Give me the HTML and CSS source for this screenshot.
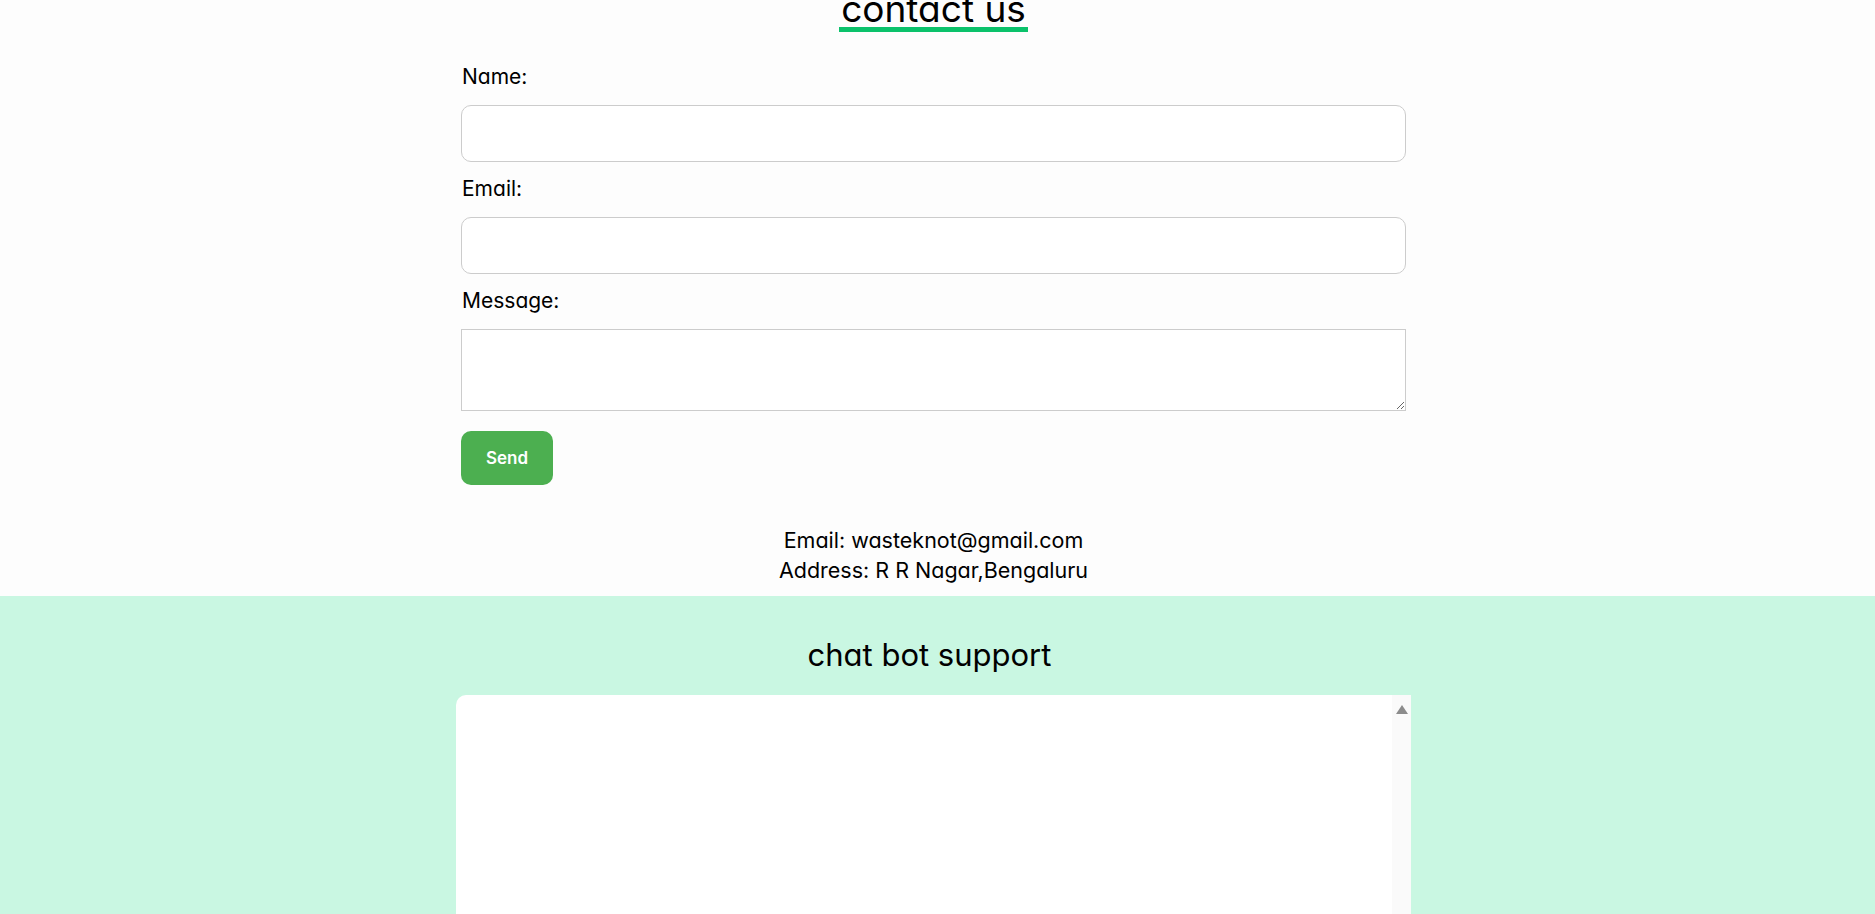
FILE: index.html
```html
<!DOCTYPE html>
<html lang="en">
<head>
<meta charset="utf-8">
<title>Contact us</title>
<link rel="stylesheet" href="styles.css">
</head>
<body>
<section class="contact">
  <div class="title-wrap"><h2 class="title">contact us</h2></div>
  <form class="form">
    <label class="label" for="name">Name:</label>
    <input class="field" id="name" type="text">
    <label class="label" for="email">Email:</label>
    <input class="field" id="email" type="email">
    <label class="label" for="msg">Message:</label>
    <textarea class="area" id="msg"></textarea>
    <button class="send" type="button">Send</button>
  </form>
  <div class="info">
    <p>Email: wasteknot@gmail.com</p>
    <p>Address: R R Nagar,Bengaluru</p>
  </div>
</section>
<section class="chat">
  <h2 class="chat-title">chat bot support</h2>
  <div class="chat-box">
    <div class="chat-body"></div>
    <div class="track"><span class="arrow"></span></div>
  </div>
</section>
</body>
</html>
```
FILE: styles.css
```css
html, body {
  margin: 0;
  padding: 0;
  height: 914px;
  overflow: hidden;
}
body {
  background: #fdfdfd;
  font-family: Inter, "Noto Sans", "Liberation Sans", sans-serif;
  font-feature-settings: "cv11" 1;
  color: #000;
}
.contact {
  padding-right: 8px;
}
.title-wrap {
  display: flex;
  justify-content: center;
  margin-top: -9px;
}
.title {
  margin: 0;
  font-size: 37px;
  font-weight: 400;
  line-height: 36px;
  border-bottom: 5px solid #0bc26b;
  padding: 0 2px;
}
.form {
  width: 945px;
  margin: 31px auto 0;
  display: flex;
  flex-direction: column;
  align-items: flex-start;
}
.label {
  font-size: 21px;
  line-height: 28px;
  padding-left: 1px;
  margin-bottom: 14px;
}
.field {
  box-sizing: border-box;
  width: 945px;
  height: 57px;
  border: 1px solid #cccccc;
  border-radius: 10px;
  background: #fff;
  margin: 0 0 13px;
  font: inherit;
}
.area {
  box-sizing: border-box;
  width: 945px;
  height: 82px;
  border: 1px solid #cccccc;
  border-radius: 0;
  background: #fff;
  margin: 0 0 20px;
  font: inherit;
}
.send {
  width: 92px;
  height: 54px;
  border: none;
  border-radius: 10px;
  background: #4caf50;
  color: #fff;
  font-family: inherit;
  font-size: 17px;
  font-weight: 600;
  padding: 0;
}
.info {
  margin-top: 40px;
  text-align: center;
  font-size: 21.5px;
  line-height: 30px;
}
.info p {
  margin: 0;
}
.chat {
  margin-top: 11px;
  background: #c9f7e2;
  padding: 41px 8px 0 0;
  height: 400px;
}
.chat-title {
  margin: 0 0 22px;
  padding-right: 8px;
  text-align: center;
  font-size: 31px;
  font-weight: 400;
  line-height: 36px;
}
.chat-box {
  width: 955px;
  height: 340px;
  margin: 0 auto;
  display: flex;
  background: #fff;
  border-top-left-radius: 10px;
  overflow: hidden;
}
.chat-body {
  flex: 1;
}
.track {
  width: 19px;
  background: #fafafa;
  display: flex;
  justify-content: center;
  padding-top: 10px;
  box-sizing: border-box;
}
.arrow {
  width: 0;
  height: 0;
  border-left: 6px solid transparent;
  border-right: 6px solid transparent;
  border-bottom: 9px solid #8c8c8c;
}
```
